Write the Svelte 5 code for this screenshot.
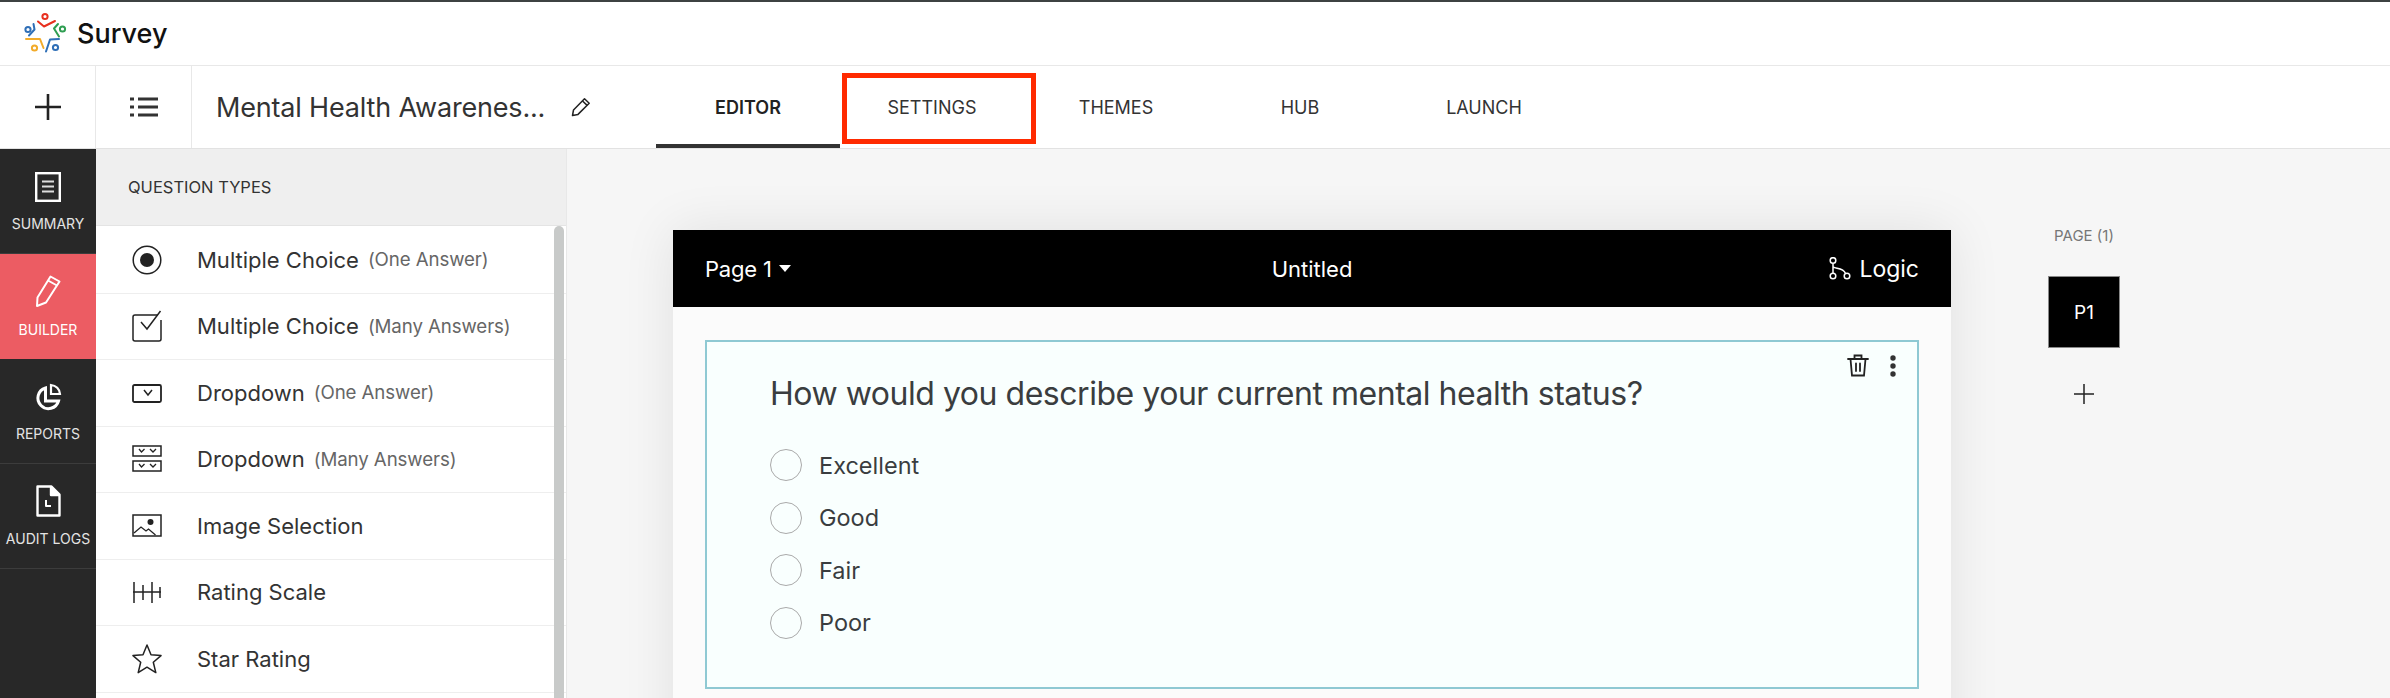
<script>
  const rows = [
    { name: 'Multiple Choice', note: '(One Answer)', icon: 'radio' },
    { name: 'Multiple Choice', note: '(Many Answers)', icon: 'check' },
    { name: 'Dropdown', note: '(One Answer)', icon: 'drop' },
    { name: 'Dropdown', note: '(Many Answers)', icon: 'drops' },
    { name: 'Image Selection', note: '', icon: 'image' },
    { name: 'Rating Scale', note: '', icon: 'scale' },
    { name: 'Star Rating', note: '', icon: 'star' }
  ];
  const tabs = ['EDITOR', 'SETTINGS', 'THEMES', 'HUB', 'LAUNCH'];
  const options = ['Excellent', 'Good', 'Fair', 'Poor'];
</script>

<div class="app">
  <header class="brand">
    <svg class="logo" viewBox="0 0 44 42" width="44" height="42" fill="none" stroke-width="2" stroke-linecap="round" stroke-linejoin="round">
      <g stroke="#e8301f"><circle cx="21" cy="4.5" r="2.6" /><path d="M14 9.5l6 5 11-5.500" /></g>
      <g stroke="#2f9e52"><circle cx="38.5" cy="17" r="2.6" /><path d="M34 12l-4 4.500 5 8" /></g>
      <g stroke="#2f6fb7"><circle cx="4" cy="17.500" r="2.6" /><path d="M9.500 12l1 5.500-5.500 6" /></g>
      <g stroke="#f2ab2a"><circle cx="10.500" cy="36" r="2.600" /><path d="M2 27h14l3.500 9" /></g>
      <g stroke="#2f6fb7"><circle cx="31.500" cy="35.500" r="2.600" /><path d="M35 27l-9 .5-4 12" /></g>
    </svg>
    <span class="brand-name">Survey</span>
  </header>

  <nav class="toolbar">
    <div class="tool">
      <svg width="28" height="28" viewBox="0 0 28 28" fill="none" stroke="#222" stroke-width="2.600"><path d="M14 1v26M1 14h26" /></svg>
    </div>
    <div class="tool">
      <svg width="28" height="22" viewBox="0 0 28 22" fill="none" stroke="#333" stroke-width="3"><path d="M0 3h4M8 3h20M0 11h4M8 11h20M0 19h4M8 19h20" /></svg>
    </div>
    <div class="title">
      <span class="title-text">Mental Health Awarenes...</span>
      <svg class="edit" width="20" height="20" viewBox="0 0 20 20" fill="none" stroke="#222" stroke-width="1.500" stroke-linejoin="round"><path d="M1.500 18.500l1-5.500L13.500 1.800l4.700 4.400L7 17.400z" /><path d="M11.500 4l4.700 4.400" /></svg>
    </div>
    <div class="tabs">
      {#each tabs as tab, i}
        <div class="tab" class:active={i === 0}>{tab}</div>
      {/each}
    </div>
    <div class="callout"></div>
  </nav>

  <main class="main">
    <aside class="rail">
      <div class="rail-item">
        <svg width="26" height="30" viewBox="0 0 26 30" fill="none" stroke="#fff"><rect x="1.200" y="1.200" width="23.600" height="27.600" stroke-width="2.400" /><path d="M7 9.500h12M7 14.500h12M7 19.500h12" stroke-width="2" stroke="#ddd" /></svg>
        <span>SUMMARY</span>
      </div>
      <div class="rail-item current">
        <svg width="26" height="33" viewBox="0 0 26 33" fill="none" stroke="#fff" stroke-width="2" stroke-linejoin="round"><path d="M2 31l.5-8.500L15.500 1.500l9 5L11 27.500z" /><path d="M13 5.500l9 5" /></svg>
        <span>BUILDER</span>
      </div>
      <div class="rail-item">
        <svg width="28" height="29" viewBox="0 0 28 29" fill="none" stroke="#fff" stroke-width="3"><path d="M11.500 5A10.500 10.500 0 1 0 24.500 18H11.500z" /><path d="M17 2v9h9A9.500 9.500 0 0 0 17 2z" stroke-width="2.200" /></svg>
        <span>REPORTS</span>
      </div>
      <div class="rail-item">
        <svg width="25" height="32" viewBox="0 0 25 32" fill="none" stroke="#fff" stroke-width="2.400" stroke-linejoin="round"><path d="M1.500 1.500h14l8 8v21h-22z" /><path d="M15 1.500v8.500h8.500" fill="#fff" /><path d="M10 15v6h5" stroke-width="2" /></svg>
        <span>AUDIT LOGS</span>
      </div>
    </aside>

    <section class="panel">
      <div class="panel-head">QUESTION TYPES</div>
      <div class="list">
        {#each rows as row}
          <div class="row">
            <svg class="row-icon" width="30" height="32" viewBox="0 0 30 32" fill="none" stroke="#222" stroke-width="1.500">
              {#if row.icon === 'radio'}
                <circle cx="15" cy="16" r="13.800" /><circle cx="15" cy="16" r="7" fill="#222" stroke="none" />
              {:else if row.icon === 'check'}
                <path d="M26 5H3a2 2 0 0 0-2 2v22a2 2 0 0 0 2 2h24a2 2 0 0 0 2-2V10" /><path d="M9 12l6 7L28.500 1" />
              {:else if row.icon === 'drop'}
                <rect x="1" y="8" width="28" height="17" rx="1.500" stroke-width="1.800" /><path d="M12 13l4 5 4-5" />
              {:else if row.icon === 'drops'}
                <rect x="1" y="3" width="28" height="10" stroke-width="1.500" /><rect x="1" y="18" width="28" height="10" stroke-width="1.500" /><path d="M7 6l2.500 3 3-3M18 6l3 3 3-3M7 21l2.500 3 3-3M18 21l3 3 3-3" stroke-width="1.300" />
              {:else if row.icon === 'image'}
                <rect x="1" y="5" width="28" height="21" stroke-width="1.500" /><circle cx="18.500" cy="12" r="3" fill="#222" stroke="none" /><path d="M2 23l7-6 5 4 2.500-2 7 6" stroke-width="1.300" />
              {:else if row.icon === 'scale'}
                <path d="M1 16h28M2 6v21M11 9v15M20 6v21M28 11v11" />
              {:else}
                <path d="M15 2l4 9.800 10 .8-7.700 6.700 2.500 10.300-8.800-5.400-8.800 5.400 2.500-10.300L1 12.600l10-.8z" stroke-linejoin="round" />
              {/if}
            </svg>
            <span class="row-name">{row.name}</span>
            {#if row.note}<span class="row-note">{row.note}</span>{/if}
          </div>
        {/each}
      </div>
      <div class="scrollbar"></div>
    </section>

    <section class="stage">
      <div class="card">
        <div class="card-head">
          <div class="page-name">Page 1 <i class="caret"></i></div>
          <div class="page-title">Untitled</div>
          <div class="logic">
            <svg width="22" height="23" viewBox="0 0 22 23" fill="none" stroke="#fff" stroke-width="1.500"><circle cx="4" cy="3.500" r="2.800" /><circle cx="4" cy="19" r="2.800" /><circle cx="18" cy="19" r="2.800" /><path d="M4 6.500v9.500M4 9.500c1 3 10 0 12.500 7" /></svg>
            <span>Logic</span>
          </div>
        </div>
        <div class="card-body">
          <div class="question">
            <div class="q-tools">
              <svg width="22" height="23" viewBox="0 0 22 23" fill="none" stroke="#222" stroke-width="1.800" stroke-linecap="round"><path d="M1 5h20M7.500 5V1.500h7V5M3.500 5l1.500 16.500h12L18.500 5M9 9.500v7.500M13 9.500v7.500" /></svg>
              <svg width="6" height="22" viewBox="0 0 6 22" fill="#333"><circle cx="3" cy="3" r="2.700" /><circle cx="3" cy="11" r="2.700" /><circle cx="3" cy="19" r="2.700" /></svg>
            </div>
            <h2>How would you describe your current mental health status?</h2>
            <div class="options">
              {#each options as opt}
                <div class="option"><i class="radio"></i><span>{opt}</span></div>
              {/each}
            </div>
          </div>
        </div>
      </div>
      <div class="pages">
        <div class="pages-label">PAGE (1)</div>
        <div class="page-thumb">P1</div>
        <svg class="page-add" width="20" height="20" viewBox="0 0 20 20" fill="none" stroke="#222" stroke-width="1.500"><path d="M10 0v20M0 10h20" /></svg>
      </div>
    </section>
  </main>
</div>

<style>
  :global(body) { margin: 0; background: #fff; }
  .app {
    width: 2390px; height: 698px; overflow: hidden;
    font-family: Inter, "Noto Sans", sans-serif; color: #333;
    border-top: 2px solid #3d4242; box-sizing: border-box;
    display: flex; flex-direction: column;
  }
  .brand {
    height: 64px; flex: none; box-sizing: border-box; border-bottom: 1px solid #e8e8e8;
    display: flex; align-items: center; padding: 0 0 2px 24px; gap: 9px;
  }
  .brand-name { font-size: 27px; font-weight: 500; color: #111; position: relative; top: 1px; }

  .toolbar {
    height: 83px; flex: none; box-sizing: border-box; border-bottom: 1px solid #e2e2e2;
    display: flex; position: relative;
  }
  .tool {
    width: 96px; box-sizing: border-box; border-right: 1px solid #e8e8e8;
    display: flex; align-items: center; justify-content: center;
  }
  .title { width: 464px; box-sizing: border-box; display: flex; align-items: center; padding-left: 24px; gap: 26px; }
  .title-text { font-size: 27px; letter-spacing: -0.18px; color: #333; white-space: nowrap; }
  .tabs { display: flex; }
  .tab {
    width: 184px; height: 82px; box-sizing: border-box;
    display: flex; align-items: center; justify-content: center;
    font-size: 18px; color: #333;
  }
  .tab.active { font-weight: 600; color: #222; border-bottom: 4px solid #333; padding-top: 4px; }
  .callout {
    position: absolute; left: 842px; top: 7px; width: 194px; height: 71px;
    box-sizing: border-box; border: 5px solid #ff2a00;
  }

  .main { flex: 1; display: flex; min-height: 0; }
  .rail { width: 96px; flex: none; background: #282828; display: flex; flex-direction: column; }
  .rail-item {
    height: 105px; flex: none; box-sizing: border-box; border-bottom: 1px solid #3c3c3c;
    display: flex; flex-direction: column; align-items: center; justify-content: flex-end;
    padding-bottom: 21px; gap: 13px; color: #e4e4e4; font-size: 14px;
  }
  .rail-item.current { background: #ec5c63; color: #fff; border-bottom: 0; }
  .panel {
    width: 471px; flex: none; box-sizing: border-box; border-right: 1px solid #e8e8e8;
    position: relative; overflow: hidden; background: #fff;
  }
  .panel-head {
    height: 77px; box-sizing: border-box; background: #efefef; border-bottom: 1px solid #e4e4e4;
    display: flex; align-items: center; padding-left: 32px; font-size: 16.500px; color: #333;
  }
  .list { padding-top: 1px; }
  .row {
    height: 66.500px; box-sizing: border-box; border-bottom: 1px solid #eee;
    display: flex; align-items: center; padding-left: 36px;
  }
  .row-icon { flex: none; margin-right: 35px; }
  .row-name { font-size: 22px; color: #333; margin-right: 9px; }
  .row-note { font-size: 18.700px; letter-spacing: -0.1px; color: #666; }
  .scrollbar {
    position: absolute; left: 458px; top: 77px; bottom: 0; width: 10px;
    background: #c8cac9; border-radius: 5px 5px 0 0;
  }

  .stage { flex: 1; background: #f6f6f6; display: flex; align-items: flex-start; min-width: 0; }
  .card {
    width: 1278px; height: 600px; flex: none; margin: 81px 0 0 106px;
    background: #fbfbfb; box-shadow: 0 0 50px rgba(0,0,0,.09);
  }
  .card-head {
    height: 77px; background: #000; color: #fff; font-size: 22px;
    display: grid; grid-template-columns: 1fr auto 1fr; align-items: center; padding: 0 32px;
  }
  .page-name { display: flex; align-items: center; gap: 7px; letter-spacing: -0.2px; }
  .caret { width: 0; height: 0; border: 6px solid transparent; border-top: 7px solid #fff; border-bottom: 0; }
  .logic { display: flex; align-items: center; justify-content: flex-end; gap: 8px; font-size: 23px; }
  .card-body { padding: 33px 32px 0; }
  .question {
    position: relative; height: 349px; box-sizing: border-box;
    background: #f9fffe; border: 2px solid #8fc9d3; padding: 30px 0 0 63px;
  }
  .q-tools {
    position: absolute; right: 21px; top: 12px; display: flex; align-items: center; gap: 21px;
  }
  h2 { margin: 0; font-size: 32px; letter-spacing: -0.47px; font-weight: 400; color: #3a3d3f; line-height: 44px; white-space: nowrap; }
  .options { margin-top: 33px; display: flex; flex-direction: column; gap: 20.500px; }
  .option { display: flex; align-items: center; gap: 17px; font-size: 23.500px; color: #3a3d3f; }
  .radio { width: 32px; height: 32px; box-sizing: border-box; border: 1px solid #aaa; border-radius: 50%; }

  .pages { width: 72px; margin: 81px 0 0 97px; display: flex; flex-direction: column; align-items: center; }
  .pages-label { font-size: 15px; color: #777; white-space: nowrap; line-height: 18px; margin-top: -3px; }
  .page-thumb {
    width: 72px; height: 72px; box-sizing: border-box; background: #000; border: 1.500px solid #888; margin-top: 31px;
    color: #fff; font-size: 19px; display: flex; align-items: center; justify-content: center;
  }
  .page-add { margin-top: 36px; }
</style>
